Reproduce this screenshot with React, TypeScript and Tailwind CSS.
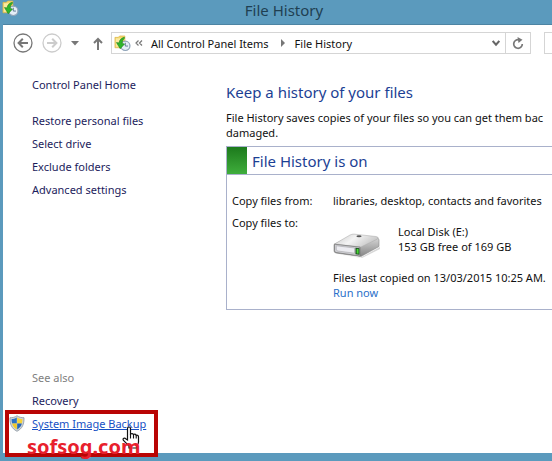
import React from "react";

function HistoryIcon({ className }: { className: string }) {
  return (
    <svg viewBox="0 0 18 18" className={className} aria-hidden="true">
      <path d="M1 2.5h3.5L6 1h5.5v12.5H1z" fill="#f3d66b" stroke="#d9b548" strokeWidth=".7" />
      <path d="M2 3.5h5v9H2z" fill="#fbeaa0" />
      <circle cx="12" cy="11.5" r="4.9" fill="#e4eef7" stroke="#8fa3b8" strokeWidth="1.3" />
      <path d="M12 8.2v3.5h2.8" fill="none" stroke="#5d7893" strokeWidth="1" />
      <path d="M10.8 2.5C7.8 3.2 5.6 5.4 5.4 8.4L2.6 8l4 6.5 4.6-5-2.6-.6c.2-2.4 1-4.4 2.8-5.7z" fill="#2fb52b" stroke="#138016" strokeWidth=".6" />
    </svg>
  );
}

function NavArrow({ label, color, back }: { label: string; color: string; back?: boolean }) {
  return (
    <button type="button" aria-label={label} className="shrink-0">
      <svg viewBox="0 0 20 20" className="block h-5 w-5" fill="none" stroke={color}>
        <circle cx="10" cy="10" r="9" strokeWidth="1.3" />
        {back ? (
          <path d="M15 10H6M9.8 5.8 5.6 10l4.2 4.2" strokeWidth="2" />
        ) : (
          <path d="M5 10h9M10.2 5.8l4.2 4.2-4.2 4.2" strokeWidth="2" />
        )}
      </svg>
    </button>
  );
}

function Drive() {
  return (
    <svg viewBox="0 0 48 25" className="h-[25px] w-12 shrink-0" aria-hidden="true">
      <defs>
        <linearGradient id="top" x1="0" y1="0" x2="1" y2=".4">
          <stop offset="0" stopColor="#c4c4c4" />
          <stop offset=".5" stopColor="#f4f4f4" />
          <stop offset="1" stopColor="#c6c6c6" />
        </linearGradient>
        <linearGradient id="side" x1="0" y1="0" x2="0" y2="1">
          <stop offset="0" stopColor="#e2e2e2" />
          <stop offset="1" stopColor="#858585" />
        </linearGradient>
      </defs>
      <path d="M3 21 28 24.5 47 14v2L29 25z" fill="#d6d6d6" />
      <path d="M1 11.5 20 2 44 5q2 .3 2 2v6.500L28 23.500 3 20q-2-.5-2-2z" fill="url(#side)" stroke="#8c8c8c" strokeWidth=".6" />
      <path d="M1.500 11 17 2q2-1 4-.9l22 2.400q3.500.6 1.500 2.500L28 14z" fill="url(#top)" stroke="#a8a8a8" strokeWidth=".5" />
      <path d="M1.500 11.200 27 14.200V23L3 19.500q-1.500-.3-1.500-2z" fill="#cfcfd3" stroke="#777" strokeWidth=".7" />
      <path d="M3.300 12.800 21.500 15v5.200L5 18q-1.700-.2-1.700-1.700z" fill="#ececf1" stroke="#9c9ca0" strokeWidth=".5" />
      <path d="M22.500 14.700 26.500 15.200v6.600l-4-.6z" fill="#17491a" />
      <path d="M23.600 15.800 25.600 16.100v4.700l-2-.3z" fill="#46d834" />
      <ellipse cx="26" cy="3.200" rx="2.600" ry="1" fill="#555" />
    </svg>
  );
}

function Shield() {
  return (
    <svg viewBox="0 0 16 17" className="h-[17px] w-4 shrink-0" aria-hidden="true">
      <path d="M8 .7C6 2.300 3.500 2.700 1 2.700 .8 9 2.500 13.500 8 16.300 13.500 13.500 15.200 9 15 2.700 12.500 2.700 10 2.300 8 .7z" fill="#cfd5da" stroke="#8b969f" strokeWidth=".8" />
      <path d="M7.800 2.500C6 3.700 4.500 4 2.600 4.100c0 1.500.1 3 .5 4.400h4.700z" fill="#2b72c4" />
      <path d="M8.200 2.500c1.800 1.200 3.300 1.500 5.200 1.600 0 1.500-.1 3-.5 4.400H8.200z" fill="#f7d438" />
      <path d="M7.800 8.500H3.100c.8 2.800 2.300 4.600 4.700 6z" fill="#f2c927" />
      <path d="M8.200 8.500h4.700c-.8 2.800-2.300 4.600-4.700 6z" fill="#2766b5" />
    </svg>
  );
}

function HandCursor() {
  return (
    <svg viewBox="0 0 18 23" className="absolute top-3 left-[113px] h-[23px] w-[18px]" aria-hidden="true">
      <path
        d="M5.500 14V2.500q0-1.500 1.500-1.500t1.500 1.500V8q2-1 3 .5 1.800-.8 2.600.8 2.400-.6 2.400 1.700v5q0 2-1.500 3.500V22h-8v-2L1.500 14.500q-1-1.700.3-2.300 1.200-.5 2.200.8z"
        fill="#fff"
        stroke="#111"
        strokeWidth="1.2"
      />
      <path d="M8.500 8v4.500M11.500 8.800v3.700M14.200 9.500v3" stroke="#111" strokeWidth="1.100" />
    </svg>
  );
}

const tasks = ["Restore personal files", "Select drive", "Exclude folders", "Advanced settings"];

export default function App() {
  return (
    <div className="flex min-h-screen flex-col overflow-hidden bg-[#5b9abd] font-['Noto_Sans',sans-serif] text-[11px] leading-[15px] whitespace-nowrap text-[#111]">
      <header className="relative flex h-6 shrink-0 items-center justify-center">
        <HistoryIcon className="absolute top-0 left-[2px] h-[17px] w-[17px]" />
        <h1 className="mb-1 pl-4 text-[15px] leading-5 text-[#1f3f52]">File History</h1>
      </header>

      <div className="mb-2 ml-[3px] flex grow flex-col border-t border-[#4d84a3] bg-white">
        <nav className="flex h-9 shrink-0 items-center pl-[10px]">
          <NavArrow label="Back" color="#777777" back />
          <div className="ml-[9px] flex">
            <NavArrow label="Forward" color="#cccccc" />
          </div>
          <button type="button" aria-label="Recent pages" className="ml-[9px]">
            <svg viewBox="0 0 8 5" className="block h-[5px] w-2">
              <path d="M0 0h8L4 4.500z" fill="#777" />
            </svg>
          </button>
          <button type="button" aria-label="Up" className="ml-[14px]">
            <svg viewBox="0 0 10 13" className="block h-[13px] w-[10px]" fill="none" stroke="#777" strokeWidth="2">
              <path d="M5 13V2M1 6l4-4 4 4" />
            </svg>
          </button>
          <div className="ml-2 flex h-[22px] grow items-center border border-[#d5d5d5] pl-[2px]">
            <HistoryIcon className="h-[17px] w-[17px]" />
            <svg viewBox="0 0 8 6" className="ml-1 h-[6px] w-2" fill="none" stroke="#777" strokeWidth="1.200">
              <path d="M3.500.5 1 3l2.500 2.500M7 .5 4.500 3 7 5.500" />
            </svg>
            <button type="button" className="ml-2">All Control Panel Items</button>
            <svg viewBox="0 0 4 8" className="ml-3 h-2 w-1">
              <path d="M0 0v8l4-4z" fill="#777" />
            </svg>
            <button type="button" className="ml-[10px]">File History</button>
            <button type="button" aria-label="Previous locations" className="mr-[5px] ml-auto">
              <svg viewBox="0 0 8 7" className="block h-[7px] w-2" fill="none" stroke="#666" strokeWidth="2">
                <path d="M.7 1 4 4.700 7.300 1" />
              </svg>
            </button>
            <button type="button" aria-label="Refresh" className="flex h-full w-[25px] items-center justify-center border-l border-[#d5d5d5]">
              <svg viewBox="0 0 12 13" className="h-[13px] w-3" fill="none" stroke="#777" strokeWidth="1.700">
                <path d="M7 2.800A4.300 4.300 0 1 0 10.300 7" />
                <path d="M5.500 0 10.500 2.800 6.500 6z" fill="#777" stroke="none" />
              </svg>
            </button>
          </div>
          <input aria-label="Search Control Panel" className="ml-[13px] h-[22px] w-2 border border-r-0 border-[#d5d5d5]" />
        </nav>

        <div className="flex grow">
          <aside className="flex w-[223px] shrink-0 flex-col pt-4 pl-[29px] text-[#1c1c5c]">
            <a href="#home" className="self-start">Control Panel Home</a>
            <ul className="mt-[21px] flex flex-col gap-2">
              {tasks.map((task) => (
                <li key={task}>
                  <a href="#task">{task}</a>
                </li>
              ))}
            </ul>
            <div className="mt-auto text-[#808080]">See also</div>
            <a href="#recovery" className="mt-2 self-start">Recovery</a>
            <div className="relative mt-[2px] -mb-1 -ml-[27px] h-[47px] w-[153px] border-4 border-[#b90504]">
              <div className="flex h-[19px] items-center gap-[7px]">
                <Shield />
                <a href="#backup" className="text-[#1650c4] underline">System Image Backup</a>
              </div>
              <HandCursor />
              <div className="relative pl-[18px] text-xl leading-7 font-bold text-[#e8202c]">sofsog.com</div>
            </div>
          </aside>

          <main className="min-w-0 grow overflow-hidden pt-[21px]">
            <h2 className="text-[15px] leading-5 text-[#1c3f94]">Keep a history of your files</h2>
            <p className="mt-2">
              File History saves copies of your files so you can get them bac
              <br />
              damaged.
            </p>
            <section className="mt-[6px] border border-r-0 border-[#a9b1cb]">
              <div className="flex h-7 items-center border-b border-[#a9b1cb]">
                <div className="h-full w-5 bg-linear-to-b from-[#1c7a1c] to-[#3fae3c]" />
                <h3 className="ml-[5px] text-[15px] leading-5 text-[#1c3f94]">File History is on</h3>
              </div>
              <dl className="grid grid-cols-[101px_1fr] gap-y-[7px] pt-[18px] pb-[9px] pl-[5px]">
                <dt>Copy files from:</dt>
                <dd>libraries, desktop, contacts and favorites</dd>
                <dt>Copy files to:</dt>
                <dd className="pt-[9px]">
                  <div className="flex items-end gap-[17px]">
                    <div className="-mb-1 flex">
                      <Drive />
                    </div>
                    <p>
                      Local Disk (E:)
                      <br />
                      153 GB free of 169 GB
                    </p>
                  </div>
                  <p className="mt-4">Files last copied on 13/03/2015 10:25 AM.</p>
                  <button type="button" className="block text-[#2a6fc9]">Run now</button>
                </dd>
              </dl>
            </section>
          </main>
        </div>
      </div>
    </div>
  );
}
